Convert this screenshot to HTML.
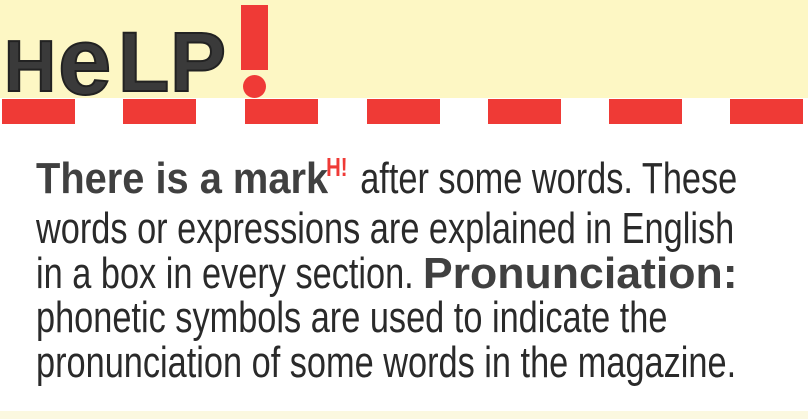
<!DOCTYPE html>
<html><head><style>
html,body{margin:0;padding:0}
body{width:808px;height:419px;overflow:hidden;background:#fff;position:relative;font-family:"Liberation Sans",sans-serif}
.top{position:absolute;left:0;top:0;width:808px;height:98px;background:#fdf7c4}
.bot{position:absolute;left:0;top:411px;width:808px;height:8px;background:#fbf8e0}
.d{position:absolute;top:99px;height:25px;width:73px;background:#ef3a36}
.l{position:absolute;color:#3a3a3a;font-weight:bold;line-height:1;-webkit-text-stroke:2px #222}
.bar{position:absolute;left:241px;top:5px;width:27px;height:65px;background:#ef3a36}
.dot{position:absolute;left:243px;top:75px;width:23px;height:23px;border-radius:50%;background:#ef3a36}
.t{position:absolute;left:36px;top:157px;font-size:44px;color:#2a2a2a;white-space:nowrap;transform:scaleX(0.78);transform-origin:left;line-height:44.8px}
.w{display:inline-block}
b{display:inline-block;color:#404040;font-weight:bold;transform-origin:left}
sup{color:#ef3a36;font-weight:bold;font-size:26px;vertical-align:0;position:relative;top:-17px;margin-left:2px;margin-right:4px}
</style></head><body>
<div class="top"></div>
<div class="bot"></div>
<div class="d" style="left:2px"></div>
<div class="d" style="left:123px"></div>
<div class="d" style="left:245px"></div>
<div class="d" style="left:367px"></div>
<div class="d" style="left:488px"></div>
<div class="d" style="left:609px"></div>
<div class="d" style="left:730px"></div>
<div class="l" style="left:4px;top:31px;font-size:72px">H</div>
<div class="l" style="left:58px;top:14px;font-size:96px">e</div>
<div class="l" style="left:118px;top:20px;font-size:84px">L</div>
<div class="l" style="left:170px;top:20px;font-size:84px">P</div>
<div class="bar"></div>
<div class="dot"></div>
<div class="t"><span class="w" style="width:370px"><b style="transform:scaleX(1.16)">There is a mark</b></span><sup>H!</sup> after some words. These<br>words or expressions are explained in English<br>in a box in every section. <span class="w" style="width:400px"><b style="transform:scaleX(1.3)">Pronunciation:</b></span><br>phonetic symbols are used to indicate the<br>pronunciation of some words in the magazine.</div>
</body></html>
